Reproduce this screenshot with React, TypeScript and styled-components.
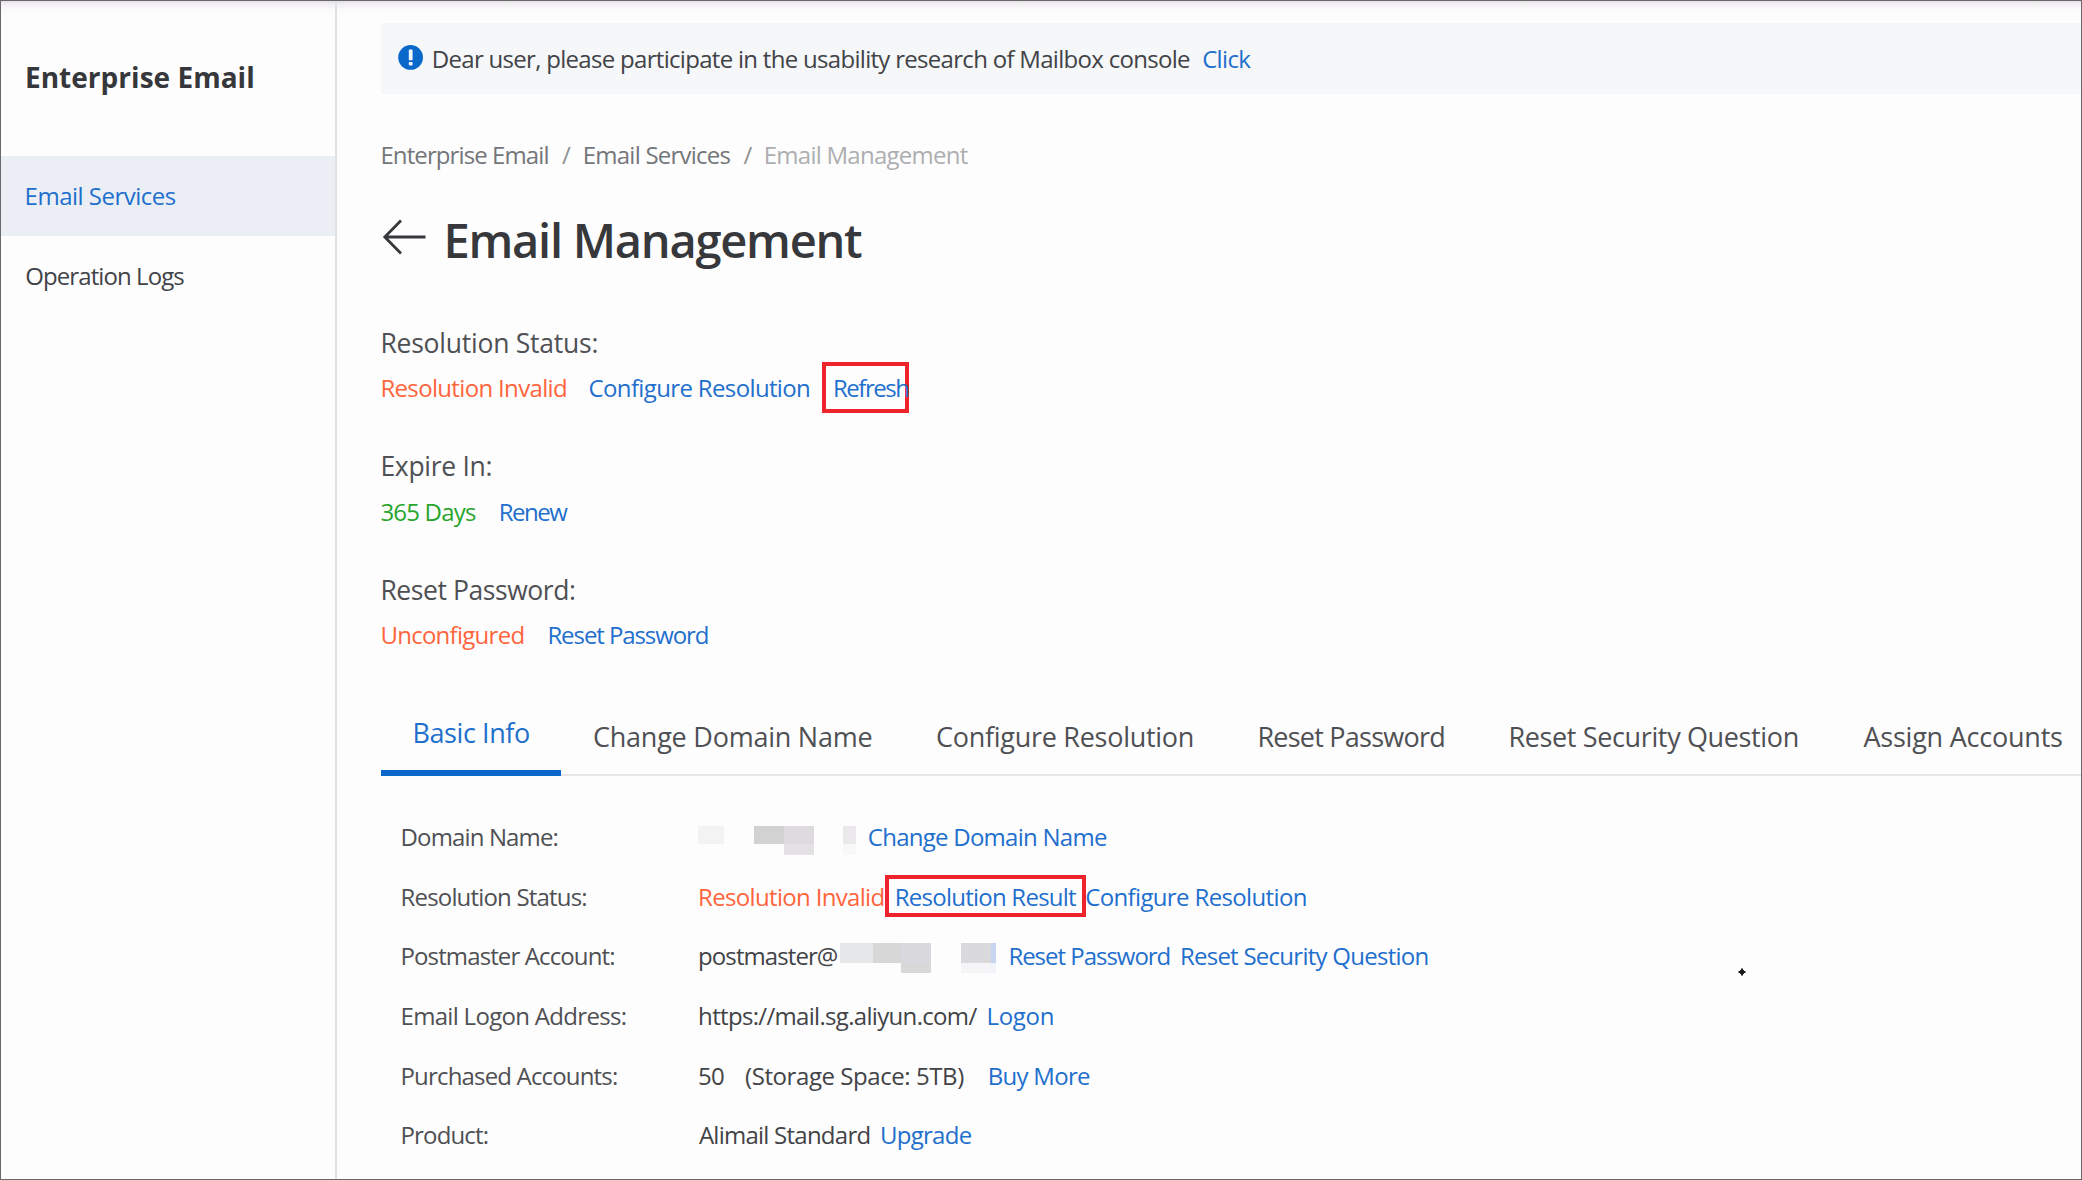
import React from 'react';
import styled, { createGlobalStyle } from 'styled-components';

const colors = {
  text: '#424347',
  label: '#4f5054',
  link: '#1f6fcd',
  brand: '#0a68cb',
  error: '#ff653c',
  success: '#27a52c',
  muted: '#74767a',
  faint: '#adaeb1',
  mark: '#ee232b',
};

const GlobalStyle = createGlobalStyle`
  * { box-sizing: border-box; }
  body {
    margin: 0;
    background: #fdfdfd;
    font-family: "Open Sans", "Noto Sans", sans-serif;
    font-size: 24px;
    color: ${colors.text};
  }
  h1, h2, p { margin: 0; }
`;

const Window = styled.div`
  display: grid;
  grid-template-columns: 336px 1fr;
  width: 2082px;
  height: 1180px;
  border: 1px solid #6a686b;
  overflow: hidden;
  background: linear-gradient(#e3e0e3 0, #f1eff1 3px, #fbfafb 8px, #fdfdfd 13px);
`;

/* Sidebar */
const Sidebar = styled.aside`
  border-right: 2px solid #e1e1e3;
`;

const Brand = styled.h2`
  padding: 56px 0 0 24px;
  height: 155px;
  font-size: 28px;
  line-height: 40px;
  font-weight: 700;
  letter-spacing: 0.02px;
  color: #36373b;
`;

const NavItem = styled.a<{ $active?: boolean; $ls: number; $inset: number }>`
  display: flex;
  align-items: center;
  height: 79.5px;
  padding-left: ${(p) => p.$inset}px;
  letter-spacing: ${(p) => p.$ls}px;
  color: ${(p) => (p.$active ? colors.link : colors.text)};
  background: ${(p) => (p.$active ? '#ebeff5' : 'transparent')};
`;

/* Shared text cell: fixed advance keeps neighbouring cells aligned */
const Txt = styled.span<{ $w?: number; $ls?: number; $c?: string; $shift?: number }>`
  flex: none;
  white-space: pre;
  width: ${(p) => (p.$w ? `${p.$w}px` : 'auto')};
  margin-left: ${(p) => p.$shift ?? 0}px;
  letter-spacing: ${(p) => p.$ls ?? -0.7}px;
  color: ${(p) => p.$c ?? 'inherit'};
`;

const Main = styled.main`
  display: flex;
  flex-direction: column;
  padding-top: 22px;
  min-width: 0;
`;

const Notice = styled.div`
  display: flex;
  align-items: center;
  flex: none;
  height: 71px;
  margin-left: 44px;
  padding-left: 17px;
  background: #f5f7f9;
`;

const NoticeIcon = styled.svg`
  flex: none;
  width: 26px;
  height: 26px;
  margin: -2px 7.8px 0 0;
`;

const Breadcrumb = styled.nav`
  display: flex;
  flex: none;
  margin-top: 44.5px;
  padding-left: 43.4px;
  line-height: 32px;
  color: ${colors.muted};
`;

const Heading = styled.header`
  display: flex;
  flex: none;
  align-items: center;
  height: 60px;
  margin-top: 39.5px;
  padding-left: 45px;
`;

const BackIcon = styled.svg`
  width: 44px;
  height: 36px;
  margin-top: -7px;
`;

const Title = styled.h1`
  margin-left: 17.5px;
  font-size: 47px;
  line-height: 60px;
  font-weight: 550;
  letter-spacing: -1.25px;
  color: #37383b;
`;

const StatusList = styled.section`
  display: flex;
  flex: none;
  flex-direction: column;
  gap: 33.5px;
  margin-top: 52.5px;
  padding-left: 43.4px;
`;

const StatusLabel = styled.div`
  font-size: 26.5px;
  line-height: 40px;
  color: ${colors.label};
`;

const StatusValues = styled.div`
  display: flex;
  align-items: center;
  height: 50px;
`;

const Highlight = styled.span<{ $w: number; $h: number; $inset: number; $lift?: number }>`
  display: flex;
  flex: none;
  align-items: center;
  width: ${(p) => p.$w}px;
  height: ${(p) => p.$h}px;
  padding-left: ${(p) => p.$inset}px;
  padding-bottom: ${(p) => p.$lift ?? 0}px;
  border: 4px solid ${colors.mark};
`;

const Tabs = styled.div`
  display: flex;
  flex: none;
  height: 77px;
  margin: 39.5px 0 0 44px;
  border-bottom: 2px solid #e6e6e7;
`;

const Tab = styled.div<{ $active?: boolean; $w: number; $inset: number; $ls: number }>`
  flex: none;
  width: ${(p) => p.$w}px;
  height: 77px;
  padding: ${(p) => (p.$active ? 13.5 : 17.5)}px 0 0 ${(p) => p.$inset}px;
  border-bottom: ${(p) => (p.$active ? `6px solid ${colors.brand}` : 'none')};
  font-size: 27px;
  line-height: 40px;
  letter-spacing: ${(p) => p.$ls}px;
  white-space: nowrap;
  color: ${(p) => (p.$active ? colors.link : colors.label)};
`;

const Details = styled.section`
  position: relative;
  flex: none;
  margin-top: 30.5px;
  padding-left: 63.5px;
`;

const DetailRow = styled.div`
  display: flex;
  align-items: center;
  height: 59.7px;
`;

const Mosaic = styled.span<{ $cols: string; $rows: string; $w: number; $drop: number; $shift: number }>`
  display: grid;
  flex: none;
  align-content: start;
  grid-template-columns: ${(p) => p.$cols};
  grid-template-rows: ${(p) => p.$rows};
  width: ${(p) => p.$w}px;
  margin: ${(p) => p.$drop}px 0 0 ${(p) => p.$shift}px;
`;

const Tile = styled.i<{ $c: string }>`
  background: ${(p) => p.$c};
`;

const Pointer = styled.svg`
  position: absolute;
  left: 1401px;
  top: 161px;
  width: 8px;
  height: 8px;
`;

const tiles = (list: string[]) => list.map((c, i) => <Tile key={i} $c={c} />);
const none = 'transparent';
const LABEL_W = 297.6;

export default function App() {
  return (
    <>
      <GlobalStyle />
      <Window>
        <Sidebar>
          <Brand>Enterprise Email</Brand>
          <NavItem $active $ls={-0.5} $inset={23.6}>Email Services</NavItem>
          <NavItem $ls={-0.92} $inset={24.3}>Operation Logs</NavItem>
        </Sidebar>

        <Main>
          <Notice>
            <NoticeIcon viewBox="0 0 26 26">
              <circle cx="12.6" cy="12.4" r="12.4" fill={colors.brand} />
              <rect x="10.8" y="4.6" width="3.8" height="10.6" rx="0.8" fill="#f2f7fc" />
              <rect x="10.8" y="17" width="3.8" height="3.4" rx="0.8" fill="#f2f7fc" />
            </NoticeIcon>
            <Txt $w={770.4} $ls={-0.7}>
              Dear user, please participate in the usability research of Mailbox console
            </Txt>
            <Txt $ls={-0.68} $c={colors.link}>Click</Txt>
          </Notice>

          <Breadcrumb>
            <Txt $w={181.5} $ls={-0.9}>Enterprise Email</Txt>
            <Txt $w={20.9} $c="#8f9194">/</Txt>
            <Txt $w={160.6} $ls={-0.77}>Email Services</Txt>
            <Txt $w={20.4} $c="#8f9194">/</Txt>
            <Txt $ls={-0.75} $c={colors.faint}>Email Management</Txt>
          </Breadcrumb>

          <Heading>
            <BackIcon viewBox="0 0 44 36" fill="none" stroke="#37383b" strokeWidth="2.8">
              <path d="M43.5 18H3M19 1.5L2.8 18L19 34.5" />
            </BackIcon>
            <Title>Email Management</Title>
          </Heading>

          <StatusList>
            <div>
              <StatusLabel><Txt $ls={-0.23}>Resolution Status:</Txt></StatusLabel>
              <StatusValues>
                <Txt $w={208.2} $ls={-0.66} $c={colors.error}>Resolution Invalid</Txt>
                <Txt $w={233.2} $ls={-0.64} $c={colors.link}>Configure Resolution</Txt>
                <Highlight $w={87} $h={51} $inset={7.2} $lift={1}>
                  <Txt $ls={-1.45} $c={colors.link}>Refresh</Txt>
                </Highlight>
              </StatusValues>
            </div>
            <div>
              <StatusLabel><Txt $ls={-0.3}>Expire In:</Txt></StatusLabel>
              <StatusValues>
                <Txt $w={118.3} $ls={-0.8} $c={colors.success}>365 Days</Txt>
                <Txt $ls={-1.5} $c={colors.link}>Renew</Txt>
              </StatusValues>
            </div>
            <div>
              <StatusLabel><Txt $ls={-0.42}>Reset Password:</Txt></StatusLabel>
              <StatusValues>
                <Txt $w={167} $ls={-0.73} $c={colors.error}>Unconfigured</Txt>
                <Txt $ls={-1.08} $c={colors.link}>Reset Password</Txt>
              </StatusValues>
            </div>
          </StatusList>

          <Tabs>
            <Tab $active $w={180} $inset={31.4} $ls={-0.4}>Basic Info</Tab>
            <Tab $w={343} $inset={32} $ls={-0.24}>Change Domain Name</Tab>
            <Tab $w={322} $inset={32} $ls={-0.28}>Configure Resolution</Tab>
            <Tab $w={251} $inset={31.4} $ls={-0.76}>Reset Password</Tab>
            <Tab $w={355} $inset={31.4} $ls={-0.36}>Reset Security Question</Tab>
            <Tab $w={240} $inset={31.4} $ls={-0.22}>Assign Accounts</Tab>
          </Tabs>

          <Details>
            <DetailRow>
              <Txt $w={LABEL_W} $ls={-0.86} $c={colors.label}>Domain Name:</Txt>
              <Mosaic $cols="26px 29.5px 30px 30px 29.5px 13px" $rows="18px 11.5px" $w={169.3} $drop={8.5} $shift={0.4}>
                {tiles(['#f3f3f4', none, '#d2d2d3', '#dddbde', none, '#ebe9ec', none, none, none, '#e3e1e3', none, '#f8f8f8'])}
              </Mosaic>
              <Txt $ls={-0.74} $c={colors.link}>Change Domain Name</Txt>
            </DetailRow>
            <DetailRow>
              <Txt $w={LABEL_W} $ls={-0.82} $c={colors.label}>Resolution Status:</Txt>
              <Txt $w={186.9} $ls={-0.67} $c={colors.error}>Resolution Invalid</Txt>
              <Highlight $w={201} $h={42.5} $inset={5.8}>
                <Txt $ls={-0.76} $c={colors.link}>Resolution Result</Txt>
              </Highlight>
              <Txt $shift={-0.8} $ls={-0.64} $c={colors.link}>Configure Resolution</Txt>
            </DetailRow>
            <DetailRow>
              <Txt $w={LABEL_W} $ls={-0.88} $c={colors.label}>Postmaster Account:</Txt>
              <Txt $w={141.9} $ls={-0.92}>postmaster@</Txt>
              <Mosaic $cols="33px 28px 30px 30px 30px 5.5px" $rows="20px 9.5px" $w={168.4} $drop={5} $shift={0}>
                {tiles(['#e6e7e8', '#d7d7d8', '#dad9dd', none, '#dadadc', '#c8d5ee', none, none, '#d9d8d9', none, '#f5f5f7', '#f1f4f9'])}
              </Mosaic>
              <Txt $w={171.5} $ls={-1.02} $c={colors.link}>Reset Password</Txt>
              <Txt $ls={-0.74} $c={colors.link}>Reset Security Question</Txt>
            </DetailRow>
            <DetailRow>
              <Txt $w={LABEL_W} $ls={-0.69} $c={colors.label}>Email Logon Address:</Txt>
              <Txt $w={288.4} $ls={-0.68}>https://mail.sg.aliyun.com/</Txt>
              <Txt $ls={-0.3} $c={colors.link}>Logon</Txt>
            </DetailRow>
            <DetailRow>
              <Txt $w={LABEL_W} $ls={-0.83} $c={colors.label}>Purchased Accounts:</Txt>
              <Txt $w={47} $ls={-0.9}>50</Txt>
              <Txt $w={242.6} $ls={-0.43}>(Storage Space: 5TB)</Txt>
              <Txt $ls={-0.7} $c={colors.link}>Buy More</Txt>
            </DetailRow>
            <DetailRow>
              <Txt $w={LABEL_W} $ls={-0.85} $c={colors.label}>Product:</Txt>
              <Txt $w={181} $shift={0.8} $ls={-0.75}>Alimail Standard</Txt>
              <Txt $ls={-0.7} $c={colors.link}>Upgrade</Txt>
            </DetailRow>
            <Pointer viewBox="0 0 8 8">
              <path d="M3 0.5h2v1.5h1v1h1.500v2H6v1H5v1.500H3V6H2V5H0.500V3H2V2h1z" fill="#1b1b1d" />
            </Pointer>
          </Details>
        </Main>
      </Window>
    </>
  );
}
